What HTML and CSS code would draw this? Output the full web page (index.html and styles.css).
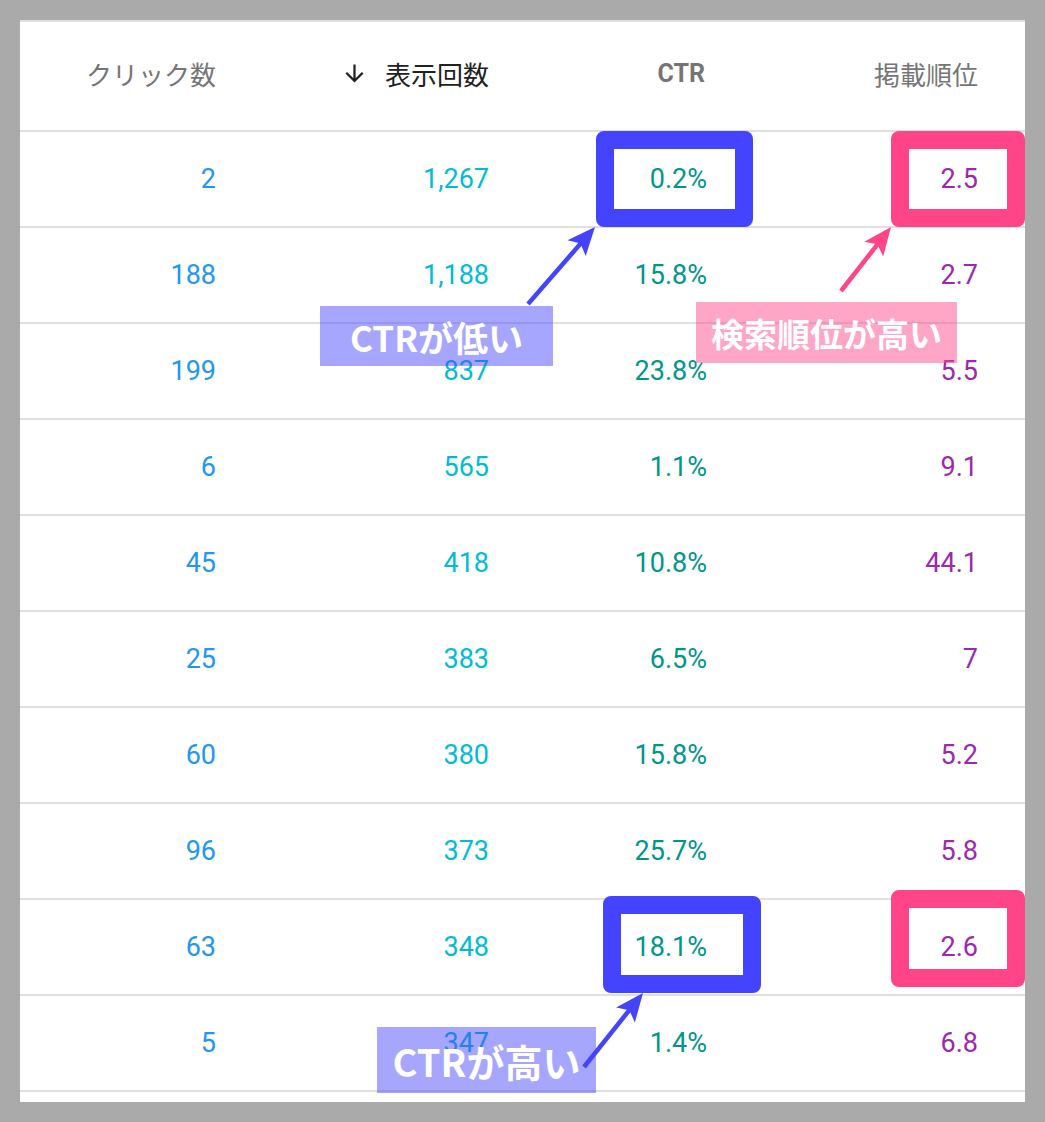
FILE: index.html
```html
<!DOCTYPE html>
<html lang="ja">
<head>
  <meta charset="UTF-8" />
  <meta name="viewport" content="width=device-width, initial-scale=1" />
  <title>検索パフォーマンス</title>
  <link rel="stylesheet" href="styles.css">
</head>
<body>
<main class="panel">
  <div class="row head">
    <div class="cell">クリック数</div>
    <div class="cell sorted">
      <svg class="sort-icon" viewBox="0 0 24 24" width="27" height="27"><path d="M20 12l-1.41-1.41L13 16.17V4h-2v12.17l-5.58-5.59L4 12l8 8 8-8z"/></svg>
      <span>表示回数</span>
    </div>
    <div class="cell ctr-head">CTR</div>
    <div class="cell">掲載順位</div>
  </div>

  <div class="row"><div class="cell clicks">2</div><div class="cell imps">1,267</div><div class="cell ctr">0.2%</div><div class="cell pos">2.5</div></div>
  <div class="row"><div class="cell clicks">188</div><div class="cell imps">1,188</div><div class="cell ctr">15.8%</div><div class="cell pos">2.7</div></div>
  <div class="row"><div class="cell clicks">199</div><div class="cell imps">837</div><div class="cell ctr">23.8%</div><div class="cell pos">5.5</div></div>
  <div class="row"><div class="cell clicks">6</div><div class="cell imps">565</div><div class="cell ctr">1.1%</div><div class="cell pos">9.1</div></div>
  <div class="row"><div class="cell clicks">45</div><div class="cell imps">418</div><div class="cell ctr">10.8%</div><div class="cell pos">44.1</div></div>
  <div class="row"><div class="cell clicks">25</div><div class="cell imps">383</div><div class="cell ctr">6.5%</div><div class="cell pos">7</div></div>
  <div class="row"><div class="cell clicks">60</div><div class="cell imps">380</div><div class="cell ctr">15.8%</div><div class="cell pos">5.2</div></div>
  <div class="row"><div class="cell clicks">96</div><div class="cell imps">373</div><div class="cell ctr">25.7%</div><div class="cell pos">5.8</div></div>
  <div class="row"><div class="cell clicks">63</div><div class="cell imps">348</div><div class="cell ctr">18.1%</div><div class="cell pos">2.6</div></div>
  <div class="row"><div class="cell clicks">5</div><div class="cell imps">347</div><div class="cell ctr">1.4%</div><div class="cell pos">6.8</div></div>

  <!-- 注釈 -->
  <div class="mark blue mark-ctr-low"></div>
  <div class="mark pink mark-pos-1"></div>
  <div class="mark blue mark-ctr-high"></div>
  <div class="mark pink mark-pos-2"></div>

  <div class="note note-blue note-ctr-low">CTRが低い</div>
  <div class="note note-pink note-pos">検索順位が高い</div>
  <div class="note note-blue note-ctr-high">CTRが高い</div>

  <svg class="arrows" width="1005" height="1082" viewBox="0 0 1005 1082">
    <g fill="#4444ff" stroke="#4444ff">
      <line x1="508" y1="284" x2="562" y2="222" stroke-width="4.5"/>
      <polygon points="575,207 565.7,236 560.5,223.6 547.5,220.2" stroke="none"/>
      <line x1="564" y1="1047" x2="610.5" y2="988.6" stroke-width="4.5"/>
      <polygon points="623,973 614.9,1002.4 609.3,990.2 596.1,987.4" stroke="none"/>
    </g>
    <g fill="#ff4488" stroke="#ff4488">
      <line x1="821" y1="271" x2="858.7" y2="222.8" stroke-width="4.5"/>
      <polygon points="871,207 863.2,236.5 857.4,224.3 844.3,221.7" stroke="none"/>
    </g>
  </svg>
</main>
</body>
</html>
```

FILE: styles.css
```css
body {
  margin: 0;
  background: #aaaaaa;
  font-family: Roboto, "Noto Sans CJK JP", sans-serif;
}
.panel {
  position: relative;
  width: 1005px;
  height: 1082px;
  box-sizing: border-box;
  margin: 20px;
  background: #fff;
  border-top: 2px solid #e0e0e0;
}
.row {
  display: grid;
  grid-template-columns: 196px 273px 218px 271px;
  height: 96px;
  box-sizing: border-box;
  border-bottom: 2px solid #e0e0e0;
  font-size: 27px;
}
.row.head {
  height: 110px;
  padding-bottom: 6px;
  font-size: 26px;
  color: #757575;
}
.cell {
  display: flex;
  align-items: center;
  justify-content: flex-end;
}
.head .cell {
  font-family: "Noto Sans CJK JP", sans-serif;
}
.head .ctr-head {
  font-family: Roboto, sans-serif;
  font-weight: 700;
  font-size: 25px;
  padding-right: 2px;
}
.sorted {
  color: #212121;
  gap: 17px;
}
.sort-icon {
  fill: #212121;
}
.clicks { color: #2196f3; }
.imps { color: #00bcd4; }
.ctr { color: #009688; }
.pos { color: #9c27b0; }

/* 注釈の枠 */
.mark {
  position: absolute;
  box-sizing: border-box;
  border: 18px solid;
  border-radius: 8px;
}
.mark.blue { border-color: #4444ff; }
.mark.pink { border-color: #ff4488; }
.mark-ctr-low { left: 576px; top: 109px; width: 157px; height: 96px; }
.mark-pos-1 { left: 871px; top: 109px; width: 134px; height: 96px; }
.mark-ctr-high { left: 583px; top: 874px; width: 158px; height: 97px; }
.mark-pos-2 { left: 871px; top: 868px; width: 134px; height: 97px; }

.note {
  position: absolute;
  display: flex;
  align-items: center;
  justify-content: center;
  color: #fff;
  font-family: "Noto Sans CJK JP", sans-serif;
  font-weight: 700;
  font-size: 33px;
}
.note-blue { background: rgba(68, 68, 255, 0.48); }
.note-pink { background: rgba(255, 68, 136, 0.48); }
.note-ctr-low { left: 300px; top: 284px; width: 233px; height: 60px; font-size: 35px; }
.note-pos { left: 676px; top: 280px; width: 261px; height: 61px; }
.note-ctr-high { left: 357px; top: 1005px; width: 219px; height: 66px; font-size: 38px; }

.arrows {
  position: absolute;
  left: 0;
  top: -2px;
  pointer-events: none;
}
```
